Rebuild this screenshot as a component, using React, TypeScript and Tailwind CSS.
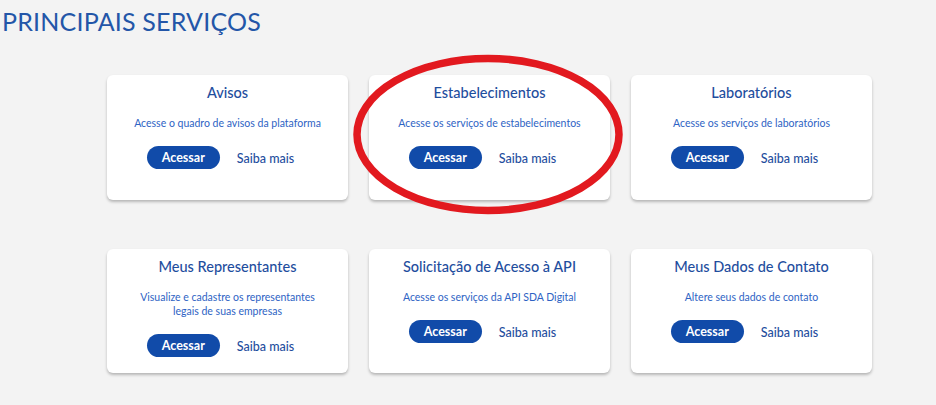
import React from 'react';

interface Service {
  title: string;
  desc: string[];
}

const SERVICES: Service[][] = [
  [
    { title: 'Avisos', desc: ['Acesse o quadro de avisos da plataforma'] },
    { title: 'Estabelecimentos', desc: ['Acesse os serviços de estabelecimentos'] },
    { title: 'Laboratórios', desc: ['Acesse os serviços de laboratórios'] },
  ],
  [
    {
      title: 'Meus Representantes',
      desc: ['Visualize e cadastre os representantes', 'legais de suas empresas'],
    },
    { title: 'Solicitação de Acesso à API', desc: ['Acesse os serviços da API SDA Digital'] },
    { title: 'Meus Dados de Contato', desc: ['Altere seus dados de contato'] },
  ],
];

function ServiceCard({ s }: { s: Service }) {
  return (
    <div className="flex flex-col items-center rounded-md bg-white pt-[8px] shadow-[0_2px_3px_rgba(0,0,0,0.25)]">
      <h3 className="text-[14.5px] font-medium leading-[20px] text-[#1f4e9e]">{s.title}</h3>
      <div className="mt-[13px] text-center text-[10.5px] leading-[14px] text-[#2e63c4]">
        {s.desc.map((line) => (
          <p key={line}>{line}</p>
        ))}
      </div>
      <div className="mt-[16px] flex items-center gap-[3px]">
        <button className="h-[23px] w-[73px] rounded-full bg-[#114ba9] text-[12.5px] font-bold leading-[23px] text-white">
          Acessar
        </button>
        <button className="h-[23px] px-[14px] pt-[3px] text-[12.5px] font-medium leading-[20px] text-[#1f4e9e]">
          Saiba mais
        </button>
      </div>
    </div>
  );
}

export default function App() {
  return (
    <div className="relative h-[405px] w-[936px] overflow-hidden bg-[#f3f3f3] font-['Lato',sans-serif]">
      <h1 className="pl-[2px] pt-[6px] text-[25px] leading-[30px] tracking-[0.2px] text-[#2356a8]">
        PRINCIPAIS SERVIÇOS
      </h1>

      <div className="mt-[39px] flex flex-col gap-[49px] pl-[107px]">
        {SERVICES.map((row, i) => (
          <div key={i} className="grid grid-cols-[241px_241px_241px] gap-[21px]">
            {row.map((s) => (
              <div key={s.title} className={i === 0 ? 'grid h-[125px]' : 'grid h-[124px]'}>
                <ServiceCard s={s} />
              </div>
            ))}
          </div>
        ))}
      </div>

      {/* hand-drawn highlight around the second card */}
      <svg className="pointer-events-none absolute left-0 top-0" width="936" height="405">
        <ellipse cx="488" cy="134.5" rx="131" ry="76" fill="none" stroke="#e2191f" strokeWidth="7.5" />
      </svg>
    </div>
  );
}
